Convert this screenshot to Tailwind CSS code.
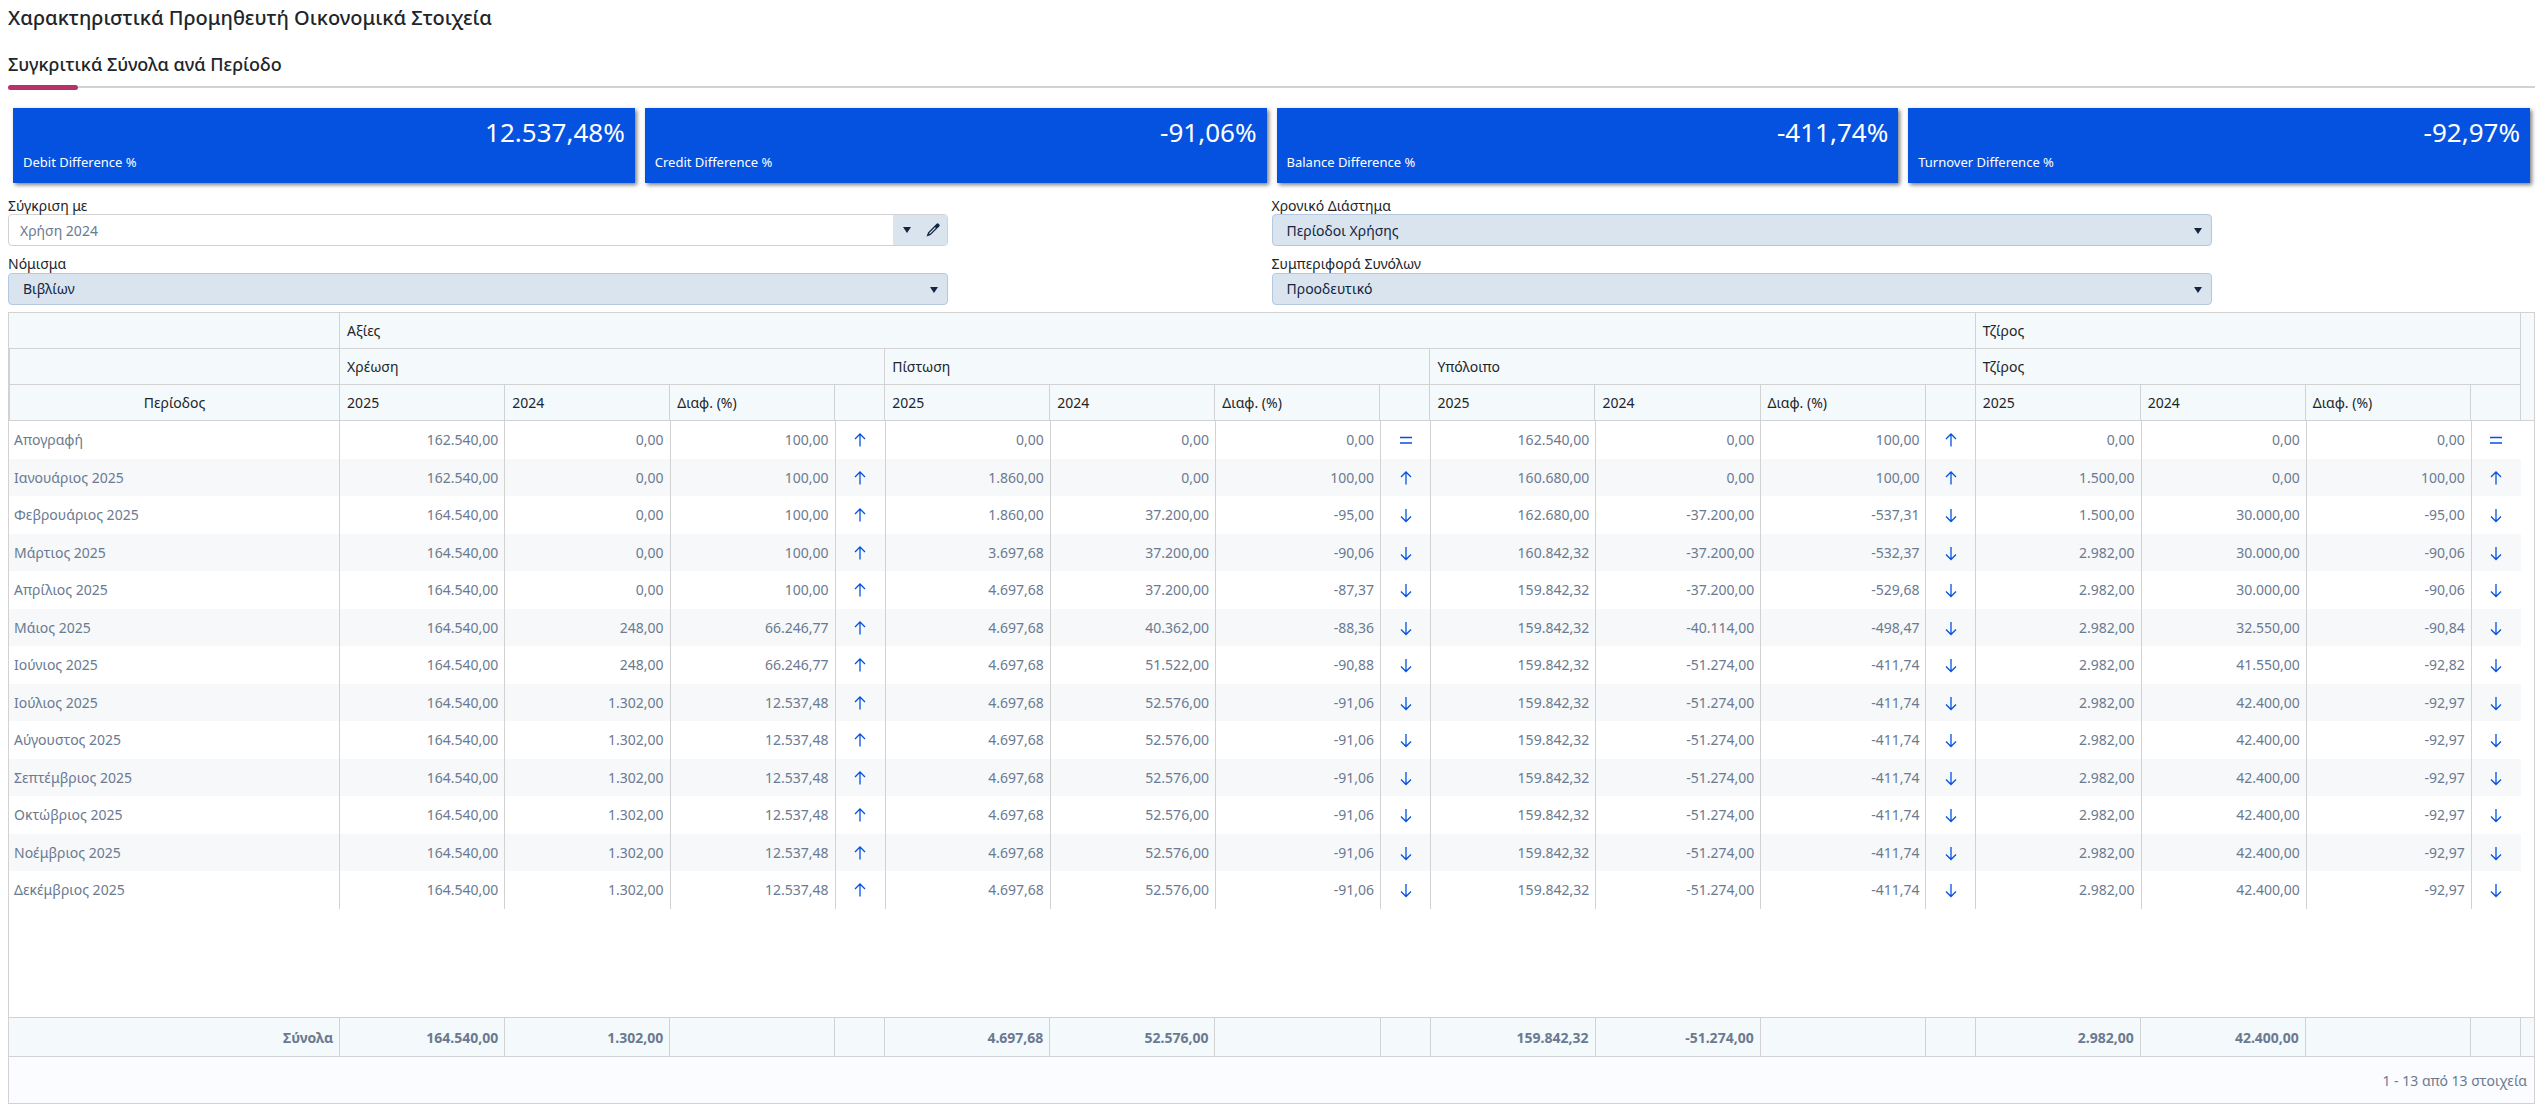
<!DOCTYPE html>
<html lang="el">

<head>
    <meta charset="UTF-8">
    <meta name="viewport" content="width=device-width, initial-scale=1.0">
    <title>Χαρακτηριστικά Προμηθευτή</title>
    <!-- Tailwind CSS CDN -->
    <script src="https://cdn.jsdelivr.net/npm/@tailwindcss/browser@4"></script>
</head>

<body class="min-h-screen flex flex-col pl-2 pr-3 pb-[9px] bg-white font-['Noto_Sans',sans-serif] text-sm text-[#212529]">
    <h1 class="pt-1 text-[20px] leading-7 font-medium">Χαρακτηριστικά Προμηθευτή Οικονομικά Στοιχεία</h1>

    <h2 class="pt-5 pb-2 text-[18px] leading-6 font-medium">Συγκριτικά Σύνολα ανά Περίοδο</h2>
    <div class="h-[6px] flex items-center">
        <div class="w-[70px] h-[5px] rounded-sm bg-[#b83268]"></div>
        <div class="flex-1 h-[2px] bg-[#d2d2d2]"></div>
    </div>

    <!-- Totals -->
    <section id="cards" class="grid grid-cols-4 gap-[10px] px-[5px] pt-[18px]"></section>

    <!-- Filters -->
    <form class="grid grid-cols-2 pt-[13px] gap-y-2 leading-5">
        <div class="pr-[10px]">
            <label for="compare" class="block h-[18px]">Σύγκριση με</label>
            <div class="w-3/4 h-8 flex border border-[#d2d2d2] rounded-[4px] overflow-hidden">
                <input id="compare" type="text" value="Χρήση 2024" class="flex-1 min-w-0 px-[11px] pt-px text-[#6b7a90] outline-none">
                <button type="button" aria-label="Άνοιγμα λίστας" class="w-[26px] pl-[2px] flex items-center justify-center bg-[#dae4ef]">
                    <svg class="w-2 h-[6px]" viewBox="0 0 8 6"><path d="M0 0h8L4 6z" fill="#12263f"/></svg>
                </button>
                <button type="button" aria-label="Επεξεργασία" class="w-7 flex items-center justify-center bg-[#dae4ef]">
                    <svg class="w-[14px] h-[14px]" viewBox="0 0 14 14"><path d="M10.6.8a1.4 1.4 0 0 1 2 0l.6.6a1.4 1.4 0 0 1 0 2L4.6 12 .6 13.4 2 9.4zM3 10.2l.9.9 6-6-.9-.9z" fill="#12263f" fill-rule="evenodd"/></svg>
                </button>
            </div>
        </div>
        <div class="pr-[10px]">
            <label for="range" class="block h-[18px]">Χρονικό Διάστημα</label>
            <div class="relative w-3/4">
                <select id="range" class="w-full h-8 px-[14px] pt-px appearance-none border border-[#b5c8e3] rounded-[4px] bg-[#dae4ef] text-[#12263f]">
                    <option>Περίοδοι Χρήσης</option>
                </select>
                <svg class="absolute right-[10px] top-[14px] w-2 h-[6px] pointer-events-none" viewBox="0 0 8 6"><path d="M0 0h8L4 6z" fill="#12263f"/></svg>
            </div>
        </div>
        <div class="pr-[10px]">
            <label for="currency" class="block h-[19px]">Νόμισμα</label>
            <div class="relative w-3/4">
                <select id="currency" class="w-full h-8 px-[14px] appearance-none border border-[#b5c8e3] rounded-[4px] bg-[#dae4ef] text-[#12263f]">
                    <option>Βιβλίων</option>
                </select>
                <svg class="absolute right-[10px] top-[14px] w-2 h-[6px] pointer-events-none" viewBox="0 0 8 6"><path d="M0 0h8L4 6z" fill="#12263f"/></svg>
            </div>
        </div>
        <div class="pr-[10px]">
            <label for="totals" class="block h-[19px]">Συμπεριφορά Συνόλων</label>
            <div class="relative w-3/4">
                <select id="totals" class="w-full h-8 px-[14px] appearance-none border border-[#b5c8e3] rounded-[4px] bg-[#dae4ef] text-[#12263f]">
                    <option>Προοδευτικό</option>
                </select>
                <svg class="absolute right-[10px] top-[14px] w-2 h-[6px] pointer-events-none" viewBox="0 0 8 6"><path d="M0 0h8L4 6z" fill="#12263f"/></svg>
            </div>
        </div>
    </form>

    <!-- Grid -->
    <div class="mt-[7px] flex-1 flex flex-col border border-[#d2d2d2] leading-5">
        <div class="pr-[13px] bg-[#f4f9fc] border-b border-[#d2d2d2]">
            <table class="w-full table-fixed border-separate border-spacing-0 border-r border-[#d2d2d2] text-left">
                <colgroup class="cols"></colgroup>
                <thead id="head"></thead>
            </table>
        </div>
        <div class="flex-1 pr-[13px]">
            <table class="w-full table-fixed border-separate border-spacing-0 text-right text-[#6b7a90]">
                <colgroup class="cols"></colgroup>
                <tbody id="rows"></tbody>
            </table>
        </div>
        <div class="pr-[13px] bg-[#f4f9fc] border-y border-[#d2d2d2]">
            <table class="w-full table-fixed border-separate border-spacing-0 border-r border-[#d2d2d2] text-right font-bold text-[#6b7a90]">
                <colgroup class="cols"></colgroup>
                <tbody id="foot"></tbody>
            </table>
        </div>
        <div class="h-[46px] px-[7px] pt-[2px] flex items-center justify-end bg-[#fafcff] text-[#6b7a90]">1 - 13 από 13 στοιχεία</div>
    </div>

    <script>
        const cards = [
            ['Debit Difference %', '12.537,48%'],
            ['Credit Difference %', '-91,06%'],
            ['Balance Difference %', '-411,74%'],
            ['Turnover Difference %', '-92,97%'],
        ];

        // period, then 2025 / 2024 / diff for each of the four groups
        const rows = [
            ['Απογραφή', '162.540,00', '0,00', '100,00', '0,00', '0,00', '0,00', '162.540,00', '0,00', '100,00', '0,00', '0,00', '0,00'],
            ['Ιανουάριος 2025', '162.540,00', '0,00', '100,00', '1.860,00', '0,00', '100,00', '160.680,00', '0,00', '100,00', '1.500,00', '0,00', '100,00'],
            ['Φεβρουάριος 2025', '164.540,00', '0,00', '100,00', '1.860,00', '37.200,00', '-95,00', '162.680,00', '-37.200,00', '-537,31', '1.500,00', '30.000,00', '-95,00'],
            ['Μάρτιος 2025', '164.540,00', '0,00', '100,00', '3.697,68', '37.200,00', '-90,06', '160.842,32', '-37.200,00', '-532,37', '2.982,00', '30.000,00', '-90,06'],
            ['Απρίλιος 2025', '164.540,00', '0,00', '100,00', '4.697,68', '37.200,00', '-87,37', '159.842,32', '-37.200,00', '-529,68', '2.982,00', '30.000,00', '-90,06'],
            ['Μάιος 2025', '164.540,00', '248,00', '66.246,77', '4.697,68', '40.362,00', '-88,36', '159.842,32', '-40.114,00', '-498,47', '2.982,00', '32.550,00', '-90,84'],
            ['Ιούνιος 2025', '164.540,00', '248,00', '66.246,77', '4.697,68', '51.522,00', '-90,88', '159.842,32', '-51.274,00', '-411,74', '2.982,00', '41.550,00', '-92,82'],
        ];
        // the remaining months carry the same progressive totals
        ['Ιούλιος', 'Αύγουστος', 'Σεπτέμβριος', 'Οκτώβριος', 'Νοέμβριος', 'Δεκέμβριος'].forEach((month) => {
            rows.push([`${month} 2025`, '164.540,00', '1.302,00', '12.537,48', '4.697,68', '52.576,00', '-91,06', '159.842,32', '-51.274,00', '-411,74', '2.982,00', '42.400,00', '-92,97']);
        });
        const totals = [['164.540,00', '1.302,00'], ['4.697,68', '52.576,00'], ['159.842,32', '-51.274,00'], ['2.982,00', '42.400,00']];

        const icons = {
            up: 'M7 14.5V2M2 7l5-5 5 5',
            down: 'M7 2v12.5M2 9.5l5 5 5-5',
            equal: 'M1 5.5h12M1 11h12',
        };

        function trend(value) {
            const name = value === '0,00' ? 'equal' : value.startsWith('-') ? 'down' : 'up';
            return `<svg class="mx-auto w-[14px] h-4" viewBox="0 0 14 16" role="img" aria-label="${name}"><path d="${icons[name]}" fill="none" stroke="#0552e0" stroke-width="1.3"/></svg>`;
        }

        document.getElementById('cards').innerHTML = cards.map(([label, value]) => `
            <div class="h-[75px] px-[10px] pt-[6px] bg-[#0552e0] text-white shadow-[2px_2px_4px_rgba(0,0,0,0.5)]">
                <div class="mb-[2px] text-[26px] leading-9 text-right">${value}</div>
                <div class="text-[13px] leading-5">${label}</div>
            </div>`).join('');

        document.querySelectorAll('.cols').forEach((el) => {
            el.innerHTML = '<col class="w-[330px]">' +
                '<col class="w-[165px]"><col class="w-[165px]"><col class="w-[165px]"><col class="w-[50px]">'.repeat(4);
        });

        const topTh = 'h-[35px] px-[7px] border-l border-[#d2d2d2] font-normal';
        const th = 'h-9 px-[7px] border-l border-t border-[#d2d2d2] font-normal';
        document.getElementById('head').innerHTML = `
            <tr>
                <td class="h-[35px]"></td>
                <th colspan="12" class="${topTh}">Αξίες</th>
                <th colspan="4" class="${topTh}">Τζίρος</th>
            </tr>
            <tr>
                <td class="${th}"></td>
                ${['Χρέωση', 'Πίστωση', 'Υπόλοιπο', 'Τζίρος'].map((name) => `<th colspan="4" class="${th}">${name}</th>`).join('')}
            </tr>
            <tr>
                <th class="${th} text-center">Περίοδος</th>
                ${`<th class="${th}">2025</th><th class="${th}">2024</th><th class="${th}">Διαφ. (%)</th><td class="${th}"></td>`.repeat(4)}
            </tr>`;

        document.getElementById('rows').innerHTML = rows.map((row) => `
            <tr class="odd:h-[38px] even:h-[37px] even:bg-[#f6f8fa]">
                <td class="px-[5px] text-left">${row[0]}</td>
                ${row.slice(1).map((value, i) => `<td class="px-[6px] border-l border-[#d2d2d2]">${value}</td>` +
                    (i % 3 === 2 ? `<td class="border-l border-[#d2d2d2]">${trend(value)}</td>` : '')).join('')}
            </tr>`).join('');

        const td = 'h-[38px] px-[6px] pt-px border-l border-[#d2d2d2]';
        document.getElementById('foot').innerHTML = `
            <tr>
                <td class="h-[38px] px-[6px] pt-px">Σύνολα</td>
                ${totals.map(([current, previous]) => `<td class="${td}">${current}</td><td class="${td}">${previous}</td><td class="${td}"></td><td class="${td}"></td>`).join('')}
            </tr>`;
    </script>
</body>

</html>
